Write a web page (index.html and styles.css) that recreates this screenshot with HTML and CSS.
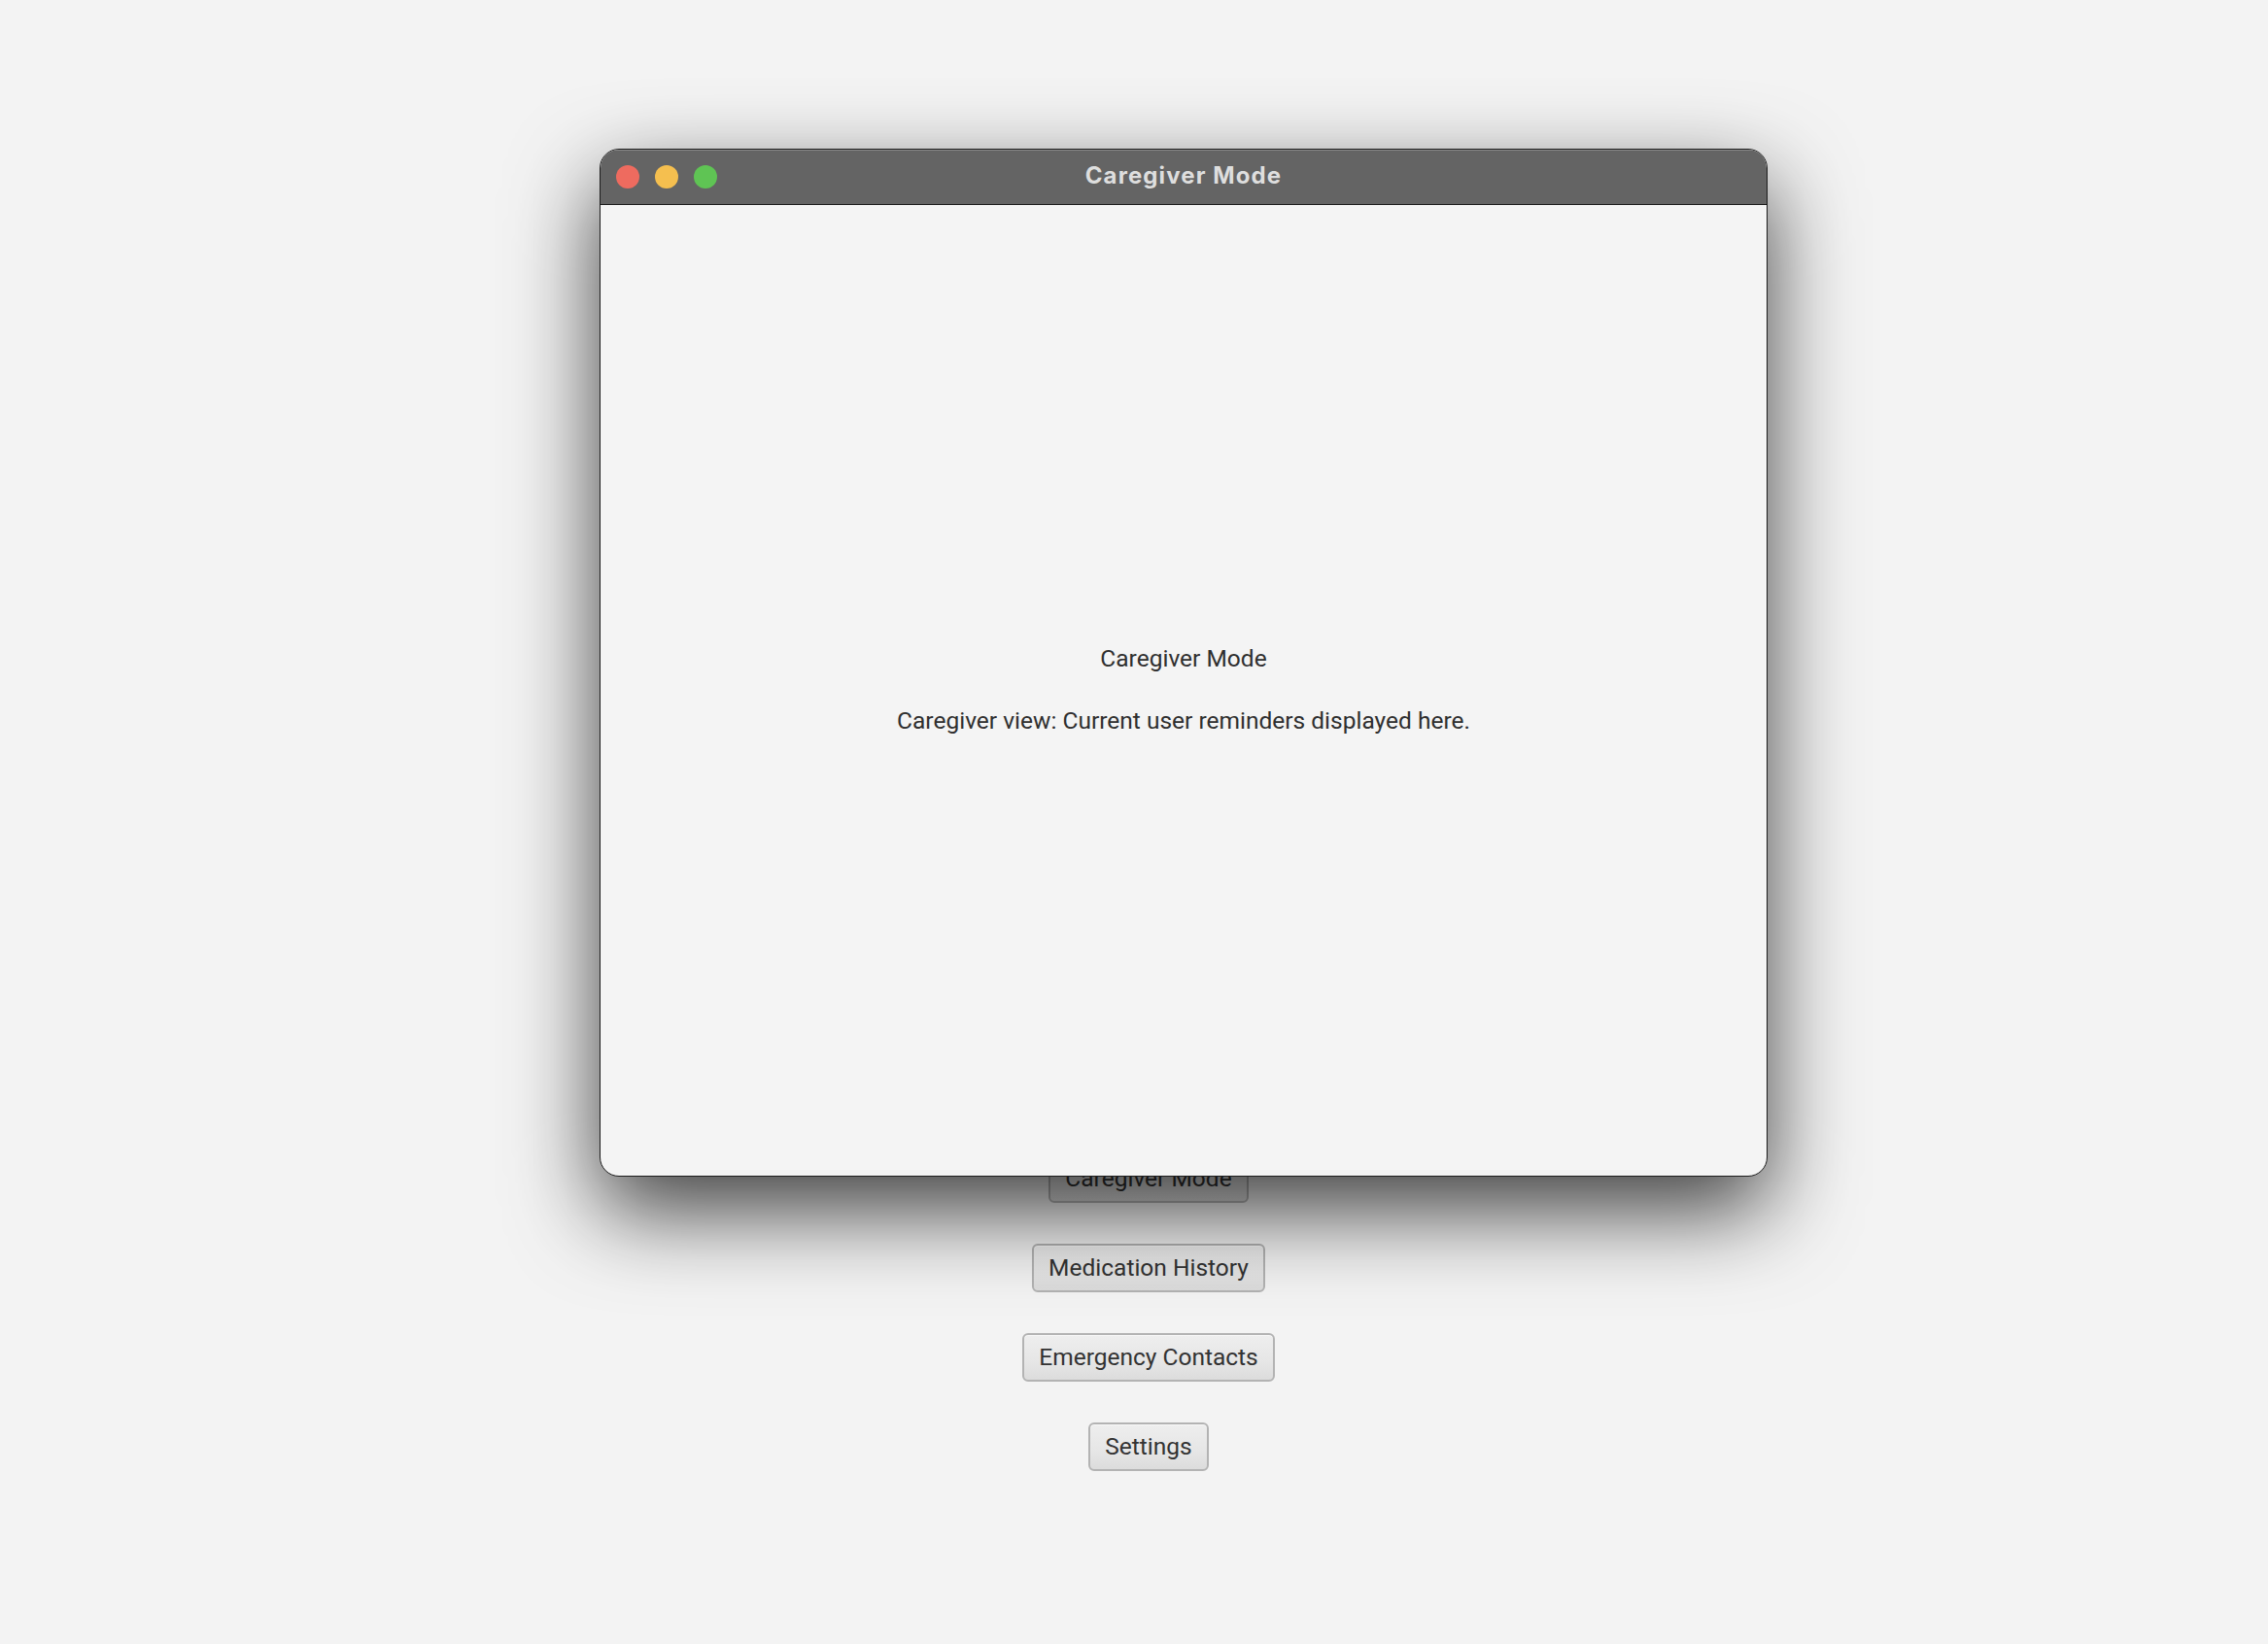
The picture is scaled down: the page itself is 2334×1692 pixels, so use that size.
FILE: index.html
```html
<!DOCTYPE html>
<html>
<head>
<meta charset="utf-8">
<title>Caregiver Mode</title>
<link rel="stylesheet" href="styles.css">
</head>
<body>
<main class="app">
  <button class="btn">Caregiver Mode</button>
  <button class="btn">Medication History</button>
  <button class="btn">Emergency Contacts</button>
  <button class="btn">Settings</button>
</main>

<section class="window">
  <header class="titlebar">
    <div class="lights">
      <span class="light red"></span>
      <span class="light yellow"></span>
      <span class="light green"></span>
    </div>
    <h1 class="title">Caregiver Mode</h1>
    <div></div>
  </header>
  <div class="content">
    <p class="label">Caregiver Mode</p>
    <p class="desc">Caregiver view: Current user reminders displayed here.</p>
  </div>
</section>
</body>
</html>
```

FILE: styles.css
```css
html, body {
  margin: 0;
  padding: 0;
}

body {
  background: #f3f3f3;
  width: 2334px;
  height: 1692px;
  overflow: hidden;
  position: relative;
  font-family: Roboto, "Liberation Sans", sans-serif;
}

.app {
  display: flex;
  flex-direction: column;
  align-items: center;
  gap: 42px;
  padding: 1188px 0 0 30px;
}

.btn {
  font-family: Roboto, "Liberation Sans", sans-serif;
  font-size: 24.5px;
  line-height: 30px;
  color: #333333;
  padding: 8px 15px;
  border: 2px solid #b3b3b3;
  border-radius: 6px;
  background: linear-gradient(to bottom, #eeeeee 0%, #e6e6e6 60%, #dcdcdc 100%);
  box-shadow: inset 0 1px 0 rgba(255, 255, 255, 0.6);
}

.window {
  position: absolute;
  left: 617px;
  top: 153px;
  width: 1202px;
  height: 1058px;
  box-sizing: border-box;
  border: 1px solid #1c1c1c;
  border-radius: 20px;
  overflow: hidden;
  background: #f4f4f4;
  box-shadow: 0 35px 90px rgba(0, 0, 0, 0.74);
  display: flex;
  flex-direction: column;
}

.titlebar {
  height: 56px;
  flex: none;
  background: #646464;
  border-bottom: 1px solid #1c1c1c;
  box-shadow: inset 0 1px 0 #8a8a8a;
  display: grid;
  grid-template-columns: 1fr auto 1fr;
  align-items: center;
}

.lights {
  display: flex;
  gap: 16px;
  padding-left: 16px;
}

.light {
  width: 24px;
  height: 24px;
  border-radius: 50%;
}

.red { background: #ee6b5f; }
.yellow { background: #f5bf4f; }
.green { background: #5fc454; }

.title {
  margin: 0;
  font-family: Inter, Roboto, sans-serif;
  font-weight: 700;
  font-size: 24px;
  letter-spacing: 1.1px;
  line-height: 30px;
  color: #dedede;
  position: relative;
  top: -1px;
}

.content {
  flex: 1;
  display: flex;
  flex-direction: column;
  align-items: center;
  justify-content: center;
  gap: 35px;
  padding-bottom: 3px;
  color: #2f2f2f;
  font-size: 24.5px;
  line-height: 29px;
}

.label, .desc {
  margin: 0;
}
```
